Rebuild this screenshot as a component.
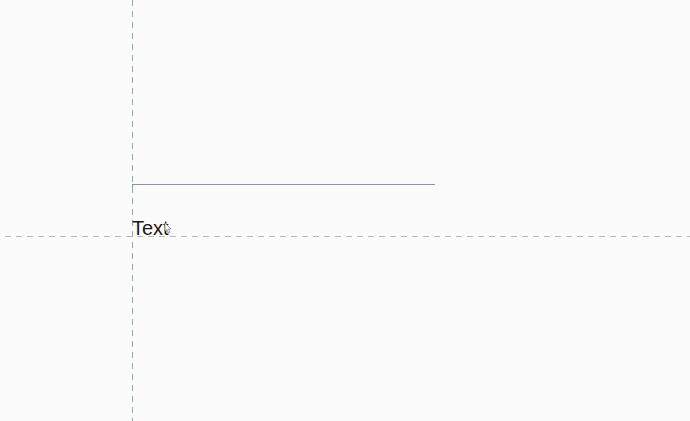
import React from "react";

export default function App() {
  return (
    <div className="relative w-[690px] h-[421px] overflow-hidden bg-[#fbfbfb]" style={{ fontFamily: '"Liberation Sans", Arial, sans-serif' }}>
      {/* vertical guide */}
      <div className="absolute left-[132px] top-0 w-px h-[421px] bg-[repeating-linear-gradient(to_bottom,#94a8a4_0px,#94a8a4_6px,transparent_6px,transparent_11px)]" />
      {/* horizontal guide */}
      <div className="absolute left-[5px] top-[236px] h-px w-[685px] bg-[repeating-linear-gradient(to_right,#b4c0b4_0px,#b4c0b4_6px,transparent_6px,transparent_11px)]" />
      {/* solid line */}
      <div className="absolute left-[132px] top-[184px] h-px w-[303px] bg-[#8a91a8]" />
      <div className="absolute left-[132px] top-[184px] w-px h-[3px] bg-[#8a91a8]" />
      {/* text */}
      <div className="absolute left-[132px] top-[217px] text-[20px] leading-[23px] text-[#1a1a1a]">Text</div>
      {/* cursor */}
      <svg className="absolute left-[164px] top-[222px]" width="8" height="12" viewBox="0 0 8 12">
        <path d="M1 1 L1 9 L3 7.5 L4.5 11 L6 10.3 L4.5 7 L7 7 Z" fill="#f4f4f4" stroke="#8a8a8a" strokeWidth="0.8" />
      </svg>
    </div>
  );
}
